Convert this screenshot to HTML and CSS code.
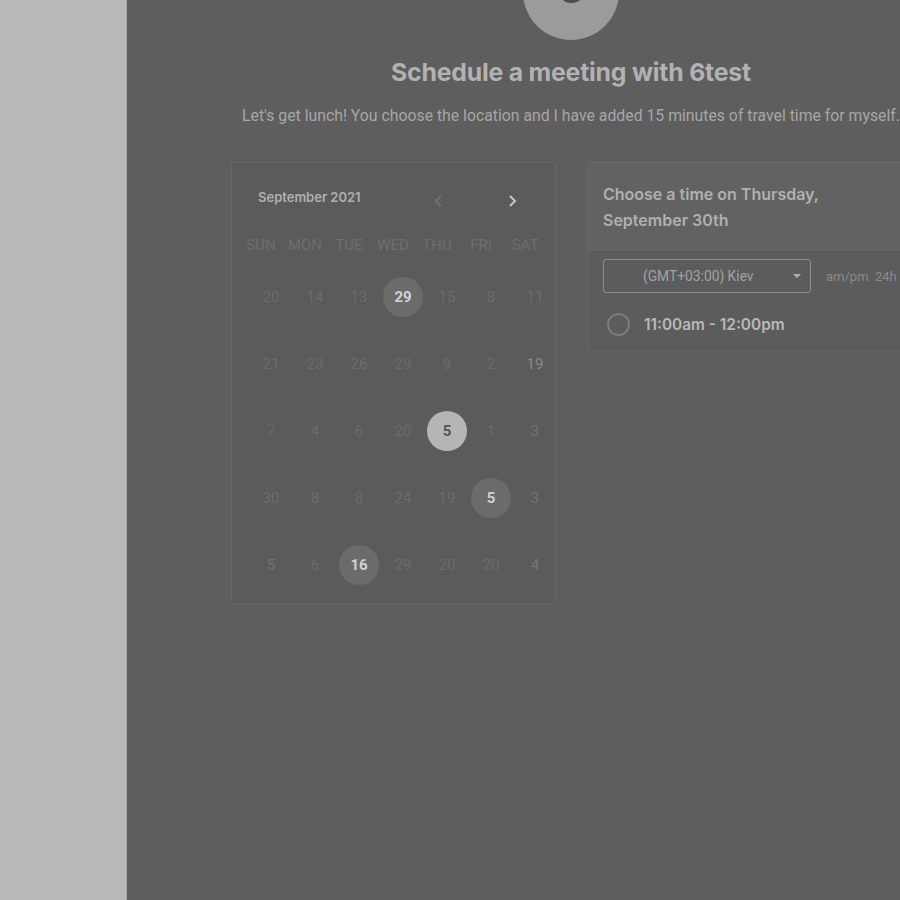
FILE: index.html
```html
<!DOCTYPE html>
<html>
<head>
<meta charset="utf-8">
<link rel="stylesheet" href="styles.css">
</head>
<body>
<div class="page">
  <aside class="sidebar"></aside>
  <main class="main">
    <div class="avatar"><span>6</span></div>
    <h1 class="title">Schedule a meeting with 6test</h1>
    <p class="subtitle">Let's get lunch! You choose the location and I have added 15 minutes of travel time for myself.</p>
    <div class="columns">
      <section class="calendar">
        <div class="cal-head">
          <span class="month">September 2021</span>
          <div class="navs">
            <svg class="nav prev" width="12" height="14" viewBox="0 0 12 14"><path d="M8 2 L3 7 L8 12" fill="none" stroke="currentColor" stroke-width="2"/></svg>
            <svg class="nav next" width="12" height="14" viewBox="0 0 12 14"><path d="M4 2 L9 7 L4 12" fill="none" stroke="currentColor" stroke-width="2"/></svg>
          </div>
        </div>
        <div class="weekdays">
          <span>SUN</span><span>MON</span><span>TUE</span><span>WED</span><span>THU</span><span>FRI</span><span>SAT</span>
        </div>
        <div class="days">
          <span>20</span><span>14</span><span>13</span><span class="avail">29</span><span>15</span><span>8</span><span>11</span>
          <span>21</span><span>23</span><span>26</span><span>29</span><span>9</span><span>2</span><span class="mid">19</span>
          <span>7</span><span>4</span><span>6</span><span>20</span><span class="selected">5</span><span>1</span><span class="mid2">3</span>
          <span>30</span><span>8</span><span>8</span><span>24</span><span>19</span><span class="avail">5</span><span class="mid2">3</span>
          <span class="mid2">5</span><span>6</span><span class="avail">16</span><span>29</span><span>20</span><span>20</span><span class="mid2">4</span>
        </div>
      </section>
      <section class="times">
        <div class="times-head">Choose a time on Thursday, September 30th</div>
        <div class="times-body">
          <div class="tz-row">
            <div class="tz-select">
              <span>(GMT+03:00) Kiev</span>
              <svg class="caret" width="8" height="4" viewBox="0 0 8 4"><path d="M0 0 L8 0 L4 4 Z" fill="currentColor"/></svg>
            </div>
            <div class="fmt">am/pm&nbsp;&nbsp;24h</div>
          </div>
          <div class="slot">
            <span class="radio"></span>
            <span class="slot-text">11:00am - 12:00pm</span>
          </div>
        </div>
      </section>
    </div>
  </main>
</div>
</body>
</html>
```
FILE: styles.css
```css
html, body {
  margin: 0;
  padding: 0;
  width: 900px;
  height: 900px;
  overflow: hidden;
  background: #5e5e5e;
}
.page {
  display: flex;
  height: 900px;
}
.sidebar {
  width: 126px;
  flex-shrink: 0;
  background: #b9b9b9;
  border-right: 1px solid #a3a3a3;
}
.main {
  width: 888px;
  flex-shrink: 0;
  background: #5e5e5e;
  display: flex;
  flex-direction: column;
  align-items: center;
}
.avatar {
  width: 96px;
  height: 96px;
  margin-top: -56px;
  border-radius: 50%;
  background: #9b9b9b;
  display: flex;
  align-items: center;
  justify-content: center;
}
.avatar span {
  font-family: Inter, sans-serif;
  font-weight: 800;
  font-size: 42px;
  color: #4c4c4c;
  margin-top: -10px;
}
.title {
  margin: 16px 0 0;
  font-family: Inter, sans-serif;
  font-weight: 700;
  font-size: 24.8px;
  line-height: 32px;
  color: #b2b2b2;
  letter-spacing: -0.2px;
}
.subtitle {
  margin: 18px 0 0;
  font-family: Roboto, sans-serif;
  font-size: 15.8px;
  line-height: 20px;
  color: #a6a6a6;
  white-space: nowrap;
}
.columns {
  margin-top: 36px;
  display: flex;
  gap: 31px;
  align-items: flex-start;
}
.calendar {
  width: 323px;
  height: 440px;
  border: 1px solid #676767;
  border-radius: 2px;
  background: #5b5b5b;
}
.cal-head {
  display: flex;
  align-items: center;
  height: 28px;
  margin-top: 24px;
  padding-left: 26px;
}
.month {
  font-family: Inter, sans-serif;
  font-weight: 600;
  font-size: 13px;
  color: #b0b0b0;
  width: 175px;
  position: relative;
  top: -4px;
}
.navs {
  display: flex;
  gap: 61px;
  align-items: center;
}
.nav.prev { color: #707070; }
.nav.next { color: #c8c8c8; }
.weekdays {
  display: grid;
  grid-template-columns: repeat(7, 44px);
  margin-top: 20px;
  padding-left: 7px;
  font-family: Roboto, sans-serif;
  font-size: 15px;
  color: #6e6e6e;
  line-height: 20px;
}
.weekdays span { text-align: center; }
.days {
  display: grid;
  grid-template-columns: repeat(7, 44px);
  grid-auto-rows: 67px;
  padding-left: 17px;
  margin-top: 8px;
  font-family: Roboto, sans-serif;
  font-size: 15px;
  color: #6b6b6b;
}
.days span {
  display: flex;
  align-items: center;
  justify-content: center;
}
.days .mid { color: #8a8a8a; }
.days .mid2 { color: #747474; }
.days .avail,
.days .selected {
  width: 40px;
  height: 40px;
  margin: auto;
  border-radius: 50%;
  font-weight: 700;
  font-size: 15px;
}
.days .avail {
  background: #6b6b6b;
  color: #d2d2d2;
}
.days .selected {
  background: #b5b5b5;
  color: #555555;
}
.times {
  width: 322px;
  border: 1px solid #666666;
  border-radius: 2px;
  background: #5c5c5c;
}
.times-head {
  background: #626262;
  border-bottom: 1px solid #5a5a5a;
  padding: 18px 40px 18px 15px;
  font-family: Inter, sans-serif;
  font-weight: 600;
  font-size: 16px;
  line-height: 26px;
  color: #b0b0b0;
}
.times-body {
  padding: 7px 0 14px 15px;
}
.tz-row {
  display: flex;
  align-items: center;
  gap: 15px;
}
.tz-select {
  box-sizing: border-box;
  width: 208px;
  height: 34px;
  border: 1px solid #8e8e8e;
  border-radius: 3px;
  display: flex;
  align-items: center;
  justify-content: space-between;
  padding: 0 9px 0 39px;
  font-family: Roboto, sans-serif;
  font-size: 13.8px;
  color: #a2a2a2;
}
.caret { color: #b0b0b0; }
.fmt {
  font-family: Roboto, sans-serif;
  font-size: 13px;
  color: #8a8a8a;
}
.slot {
  display: flex;
  align-items: center;
  gap: 14px;
  margin-top: 20px;
  padding-left: 4px;
}
.radio {
  width: 23px;
  height: 23px;
  border: 2px solid #7b7b7b;
  border-radius: 50%;
  box-sizing: border-box;
}
.slot-text {
  font-family: Inter, sans-serif;
  font-weight: 600;
  font-size: 15.4px;
  color: #b8b8b8;
}
```
